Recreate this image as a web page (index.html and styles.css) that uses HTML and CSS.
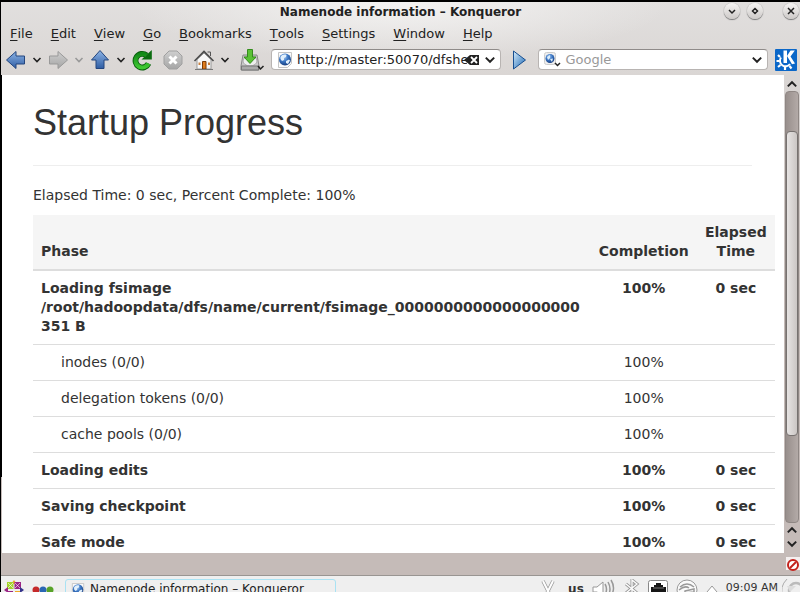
FILE: index.html
```html
<!DOCTYPE html>
<html lang="en">
<head>
<meta charset="utf-8">
<title>Namenode information – Konqueror</title>
<link rel="stylesheet" href="styles.css">
</head>
<body>
<svg class="defs" width="0" height="0" aria-hidden="true">
  <defs>
    <linearGradient id="blue" x1="0" y1="0" x2="0" y2="1"><stop offset="0" stop-color="#8db4e6"/><stop offset="1" stop-color="#2f5da3"/></linearGradient>
    <linearGradient id="grey" x1="0" y1="0" x2="0" y2="1"><stop offset="0" stop-color="#cfcfcf"/><stop offset="1" stop-color="#a5a5a5"/></linearGradient>
    <linearGradient id="green" x1="0" y1="0" x2="0" y2="1"><stop offset="0" stop-color="#128a18"/><stop offset="1" stop-color="#3fc832"/></linearGradient>
    <linearGradient id="sky" x1="0" y1="0" x2="1" y2="1"><stop offset="0" stop-color="#d5ecfb"/><stop offset="1" stop-color="#1d68b4"/></linearGradient>
    <radialGradient id="ball" cx=".4" cy=".3" r=".7"><stop offset="0" stop-color="#a9cdf3"/><stop offset=".5" stop-color="#3c77c4"/><stop offset="1" stop-color="#173f82"/></radialGradient>
    <symbol id="globe" viewBox="0 0 16 16">
      <path d="M1.500.500h13v11l-4 4h-9z" fill="#fafafa" stroke="#c4c4c4"/>
      <circle cx="8" cy="7.500" r="6" fill="url(#ball)"/>
      <path d="M3.500 5C5 2.500 8 2 9.500 3L9 5 7 6v2L5 9 3.500 7zM9 9l3-1.500 1 1-2 3.500-2-1z" fill="#e2f0fc"/>
    </symbol>
    <symbol id="chev" viewBox="0 0 10 8"><path d="M1.500 2 5 5.500 8.500 2" fill="none" stroke="currentColor" stroke-width="1.600"/></symbol>
  </defs>
</svg>
<div class="window">
  <header class="chrome">
    <div class="titlebar">
      <span class="title">Namenode information – Konqueror</span>
      <div class="winbtns">
        <button aria-label="Minimize"><svg width="16" height="16" viewBox="0 0 16 16"><path d="M5 7l3 3 3-3" /></svg></button>
        <button aria-label="Maximize"><svg width="16" height="16" viewBox="0 0 16 16"><path d="M8 5.500 10.500 8 8 10.500 5.500 8z"/></svg></button>
        <button class="close" aria-label="Close"><svg width="16" height="16" viewBox="0 0 16 16"><path d="M5 5l6 6M11 5l-6 6"/></svg></button>
      </div>
    </div>
    <nav class="menu">
      <button><u>F</u>ile</button><button><u>E</u>dit</button><button><u>V</u>iew</button><button><u>G</u>o</button><button><u>B</u>ookmarks</button><button><u>T</u>ools</button><button><u>S</u>ettings</button><button><u>W</u>indow</button><button><u>H</u>elp</button>
    </nav>
    <div class="toolbar">
      <div class="tools">
        <button aria-label="Back"><svg width="22" height="22" viewBox="0 0 22 22"><path d="M1.500 11 11 2.500V7h8.500v8H11v4.500z" fill="url(#blue)" stroke="#24467e"/></svg></button>
        <button class="drop" aria-label="Back history"><svg width="10" height="8"><use href="#chev"/></svg></button>
        <button aria-label="Forward"><svg width="22" height="22" viewBox="0 0 22 22"><path d="M20.500 11 11 2.500V7H2.500v8H11v4.500z" fill="url(#grey)" stroke="#999"/></svg></button>
        <button class="drop off" aria-label="Forward history"><svg width="10" height="8"><use href="#chev"/></svg></button>
        <button aria-label="Up"><svg width="22" height="22" viewBox="0 0 22 22"><path d="M11 1.500 19.500 11H15v8.500H7V11H2.500z" fill="url(#blue)" stroke="#24467e"/></svg></button>
        <button class="drop" aria-label="Up history"><svg width="10" height="8"><use href="#chev"/></svg></button>
        <button aria-label="Reload"><svg width="22" height="22" viewBox="0 0 22 22"><path d="M15.500 6.300A6.800 6.800 0 1 0 17.500 14.500" fill="none" stroke="#075b0b" stroke-width="5.800"/><path d="M10.500 10.500h10.300V1z" fill="#0b6c10"/><path d="M15.500 6.300A6.800 6.800 0 1 0 17.500 14.500" fill="none" stroke="url(#green)" stroke-width="4.200"/></svg></button>
        <button class="stop" aria-label="Stop"><svg width="22" height="22" viewBox="0 0 22 22"><path d="M7 2h8l5 5v8l-5 5H7l-5-5V7z" fill="url(#grey)" stroke="#a0a0a0"/><path d="M7.500 7.500l7 7M14.500 7.500l-7 7" stroke="#fff" stroke-width="3"/></svg></button>
        <button class="home" aria-label="Home"><svg width="22" height="22" viewBox="0 0 22 22"><path d="M4 10.500 11 4l7 6.500V20H4z" fill="#f8f8f8" stroke="#999"/><path d="M1.500 12 11 2.500l9.500 9.500" fill="none" stroke="#4b4b4b" stroke-width="1.600"/><path d="M14.500 3h3v4" fill="none" stroke="#555"/><path d="M9.500 12.500h3.500V20H9.500z" fill="#e07c1c" stroke="#7a3d0b"/><path d="M5.500 13.500h2v2.500h-2zM15 13.500h2v2.500h-2z" fill="#c9803f"/><path d="M2 20.500h18" stroke="#777"/></svg></button>
        <button class="drop" aria-label="Home list"><svg width="10" height="8"><use href="#chev"/></svg></button>
        <button class="save" aria-label="Downloads"><svg width="26" height="22" viewBox="0 0 26 22"><path d="M4 6h14l2 11v4H2v-4z" fill="#c9c9c9" stroke="#888"/><ellipse cx="11" cy="12" rx="7" ry="5" fill="#eee" stroke="#aaa"/><path d="M2.500 17h17v4h-17z" fill="#aaa" stroke="#777"/><path d="M8.500.500h5V8H17l-6 6.500L5 8h3.500z" fill="#5ac135" stroke="#348d1c"/><path d="M19 17l2.500 3 3-3" fill="none" stroke="#222" stroke-width="1.500"/></svg></button>
      </div>
      <div class="field address">
        <svg width="16" height="16"><use href="#globe"/></svg>
        <input type="text" aria-label="Location" value="http://master:50070/dfshealth.html">
        <button class="clear" aria-label="Clear location"><svg width="16" height="12" viewBox="0 0 16 12"><path d="M0 6 6 1h9v10H6z" fill="#222"/><path d="M7 3l6 6M13 3 7 9" stroke="#fff" stroke-width="1.800"/></svg></button>
        <button class="drop" aria-label="Location history"><svg width="12" height="10"><use href="#chev"/></svg></button>
      </div>
      <button class="go" aria-label="Go"><svg width="15" height="20" viewBox="0 0 15 20"><path d="M1.500 1 13.500 10 1.500 19z" fill="url(#sky)" stroke="#174f91"/></svg></button>
      <div class="field search">
        <svg width="18" height="16" viewBox="0 0 18 16"><rect x=".5" y=".5" width="11" height="12" rx="2" fill="#eee" stroke="#ccc"/><circle cx="6" cy="6.500" r="4.500" fill="url(#ball)"/><path d="M3 5l3-2v3L4 8zM6 7l3-.5L8 10z" fill="#dcedfb"/><path d="M11 11l2.500 2.500L16 11" fill="none" stroke="#222" stroke-width="1.500"/></svg>
        <input type="text" aria-label="Web search" placeholder="Google">
        <button class="drop" aria-label="Search history"><svg width="12" height="10"><use href="#chev"/></svg></button>
      </div>
      <svg class="kde" width="22" height="22" viewBox="0 0 22 22"><rect width="22" height="22" rx="1" fill="#0b67c8"/><path d="M6 8.500A5.500 5.500 0 1 0 15 15" fill="none" stroke="#fff" stroke-width="2"/><path d="M5 8 3 6M4.500 12H1.500M5.500 16l-2.500 2M10 18v3M14.500 17l2 2.500" stroke="#fff" stroke-width="2.200"/><path d="M8.500 1.500H12v12.500H8.500zM12 7l3.500-5.500h4.300L15.500 7.500l4.500 7-3 .8z" fill="#fff"/></svg>
    </div>
  </header>
  <div class="view">
    <main class="page">
      <h1>Startup Progress</h1>
      <p>Elapsed Time: 0 sec, Percent Complete: 100%</p>
      <table>
        <thead><tr><th>Phase</th><th>Completion</th><th>Elapsed Time</th></tr></thead>
        <tbody>
          <tr class="phase"><td>Loading fsimage /root/hadoopdata/dfs/name/current/fsimage_0000000000000000000 351 B</td><td>100%</td><td>0 sec</td></tr>
          <tr class="step"><td>inodes (0/0)</td><td>100%</td><td></td></tr>
          <tr class="step"><td>delegation tokens (0/0)</td><td>100%</td><td></td></tr>
          <tr class="step"><td>cache pools (0/0)</td><td>100%</td><td></td></tr>
          <tr class="phase"><td>Loading edits</td><td>100%</td><td>0 sec</td></tr>
          <tr class="phase"><td>Saving checkpoint</td><td>100%</td><td>0 sec</td></tr>
          <tr class="phase"><td>Safe mode</td><td>100%</td><td>0 sec</td></tr>
        </tbody>
      </table>
    </main>
    <div class="scroll">
      <button aria-label="Scroll up"><svg class="up" width="12" height="10"><use href="#chev"/></svg></button>
      <div class="track"><div class="thumb"></div></div>
      <button aria-label="Page up"><svg class="up" width="12" height="10"><use href="#chev"/></svg></button>
      <button aria-label="Scroll down"><svg width="12" height="10"><use href="#chev"/></svg></button>
    </div>
  </div>
  <div class="status">
    <svg width="14" height="16" viewBox="0 0 14 16"><path d="M0 1h14v13H0z" fill="#f5f0f0"/><circle cx="7" cy="9" r="5" fill="#fff" stroke="#c3221c" stroke-width="2"/><path d="M4 12l6-6" stroke="#c3221c" stroke-width="2"/></svg>
  </div>
  <footer class="taskbar">
    <button class="start" aria-label="Applications"><svg width="20" height="20" viewBox="0 0 20 20"><path d="M10 0l3 4H7z" fill="#efa724"/><path d="M3 2h6.500v7H3z" fill="#a4d32c"/><path d="M10.500 2H17v7h-6.500z" fill="#9b2586"/><path d="M3 11h6v6H3z" fill="#9b2586"/><path d="M11 11h6v6h-6z" fill="#efa724"/><path d="M0 10l4-3v6z" fill="#9b2586"/><path d="M20 10l-4-3v6z" fill="#35348b"/><path d="M4 3l5 5M16 3l-5 5M9 3 4 8M11 3l5 5" stroke="#fff" stroke-width=".6"/></svg></button>
    <button class="dots" aria-label="Activities"><svg width="22" height="14" viewBox="0 0 22 14"><circle cx="4" cy="4" r="3.500" fill="#c52a2a"/><circle cx="11" cy="4" r="3.500" fill="#2b67b4"/><circle cx="18" cy="4" r="3.500" fill="#58a329"/></svg></button>
    <button class="task"><svg width="14" height="16" viewBox="0 0 16 16"><use href="#globe"/></svg><span>Namenode information – Konqueror</span></button>
    <div class="tray">
      <svg width="16" height="18" viewBox="0 0 16 18"><path d="M3 2l6 12M13 2 7 14" stroke="#999" stroke-width="3.500"/><path d="M3 2l6 12M13 2 7 14" stroke="#fff" stroke-width="2"/></svg>
      <span class="layout">us</span>
      <svg width="24" height="18" viewBox="0 0 24 18" fill="none" stroke="#999"><path d="M1 8h4l6-5v14l-6-4H1z" fill="#fff"/><path d="M13 5q3 5 0 11M16 3q4 7 0 14M19 1q5 8 0 16" stroke-width="1.500"/></svg>
      <svg width="16" height="18" viewBox="0 0 16 18" fill="none"><path d="M2 5l11 9-5 4V1l5 4-11 9" stroke="#999" stroke-width="3"/><path d="M2 5l11 9-5 4V1l5 4-11 9" stroke="#fff" stroke-width="1.300"/></svg>
      <svg width="20" height="18" viewBox="0 0 20 18"><rect x=".5" y="1.500" width="19" height="18" rx="2" fill="#fff" stroke="#888"/><path d="M3 17V8h3V6h2V4h5v2h2v2h3v9z" fill="#161616"/><path d="M5 9h11" stroke="#777"/></svg>
      <svg width="22" height="18" viewBox="0 0 22 18" fill="none" stroke="#999"><circle cx="11" cy="11" r="10" fill="#fafafa"/><path d="M4 8q7-6 14 0M3 11q6-5 10-2M9 12l9-2v3l-9 1z" stroke-width="1.500"/></svg>
      <svg width="12" height="18" viewBox="0 0 12 18"><path d="M1 13l5-6 5 6-2 2H3z" fill="#fff" stroke="#999"/></svg>
      <time>09:09 AM</time>
      <svg class="cashew" width="18" height="18" viewBox="0 0 18 18" fill="none"><path d="M5 0Q-3 8 1 18" stroke="#aaa"/><circle cx="14" cy="11" r="7" stroke="#bbb" stroke-width="2.500"/><path d="M5 7h9l-6 6z" fill="#ddd"/></svg>
    </div>
  </footer>
</div>
</body>
</html>
```
FILE: styles.css
```css
* { box-sizing: border-box; }

body {
  margin: 0;
  overflow: hidden;
  background: #000;
  color: #333;
  font: 14px/19px "DejaVu Sans", sans-serif;
}

button {
  display: flex;
  align-items: center;
  justify-content: center;
  padding: 0;
  border: 0;
  background: none;
  color: #222;
  font: inherit;
}

svg { display: block; flex: none; }
.defs { position: absolute; }

.window {
  display: flex;
  flex-direction: column;
  height: 100vh;
  padding: 2px 0 0 1px;
}

.chrome {
  flex: none;
  background: radial-gradient(ellipse 270px 60px at 50% 0, #f4f3f2, transparent), linear-gradient(#e1dfde, #dad6d4);
  font-size: 13px;
}

.titlebar { display: flex; position: relative; height: 21px; }
.title { flex: 1; text-align: center; font-weight: bold; font-size: 12px; line-height: 21px; color: #222; }
.winbtns { position: absolute; right: 1px; top: 1px; display: flex; gap: 7px; }
.winbtns button {
  width: 16px;
  height: 16px;
  border-radius: 50%;
  background: linear-gradient(#f5f4f3, #cdcac8);
  box-shadow: 0 1px 1px #777, 0 0 1px #888;
}
.winbtns .close { margin-left: 13px; }
.winbtns path { fill: none; stroke: #222; stroke-width: 1.5; }

.menu { display: flex; gap: 18px; height: 21px; padding-left: 9px; }
.menu u { text-underline-offset: 2px; }

.toolbar { display: flex; align-items: center; height: 31px; padding: 0 3px 0 4px; }
.tools { display: flex; align-items: center; width: 266px; }
.drop { width: 20px; }
.off { color: #999; }
.stop { margin-left: 9px; }
.home { margin-left: 9px; }
.save { margin-left: 4px; }

.field {
  display: flex;
  align-items: center;
  min-width: 0;
  height: 21px;
  padding: 0 0 0 5px;
  border: 1px solid #b8b4b2;
  border-top-color: #8f8b89;
  border-radius: 4px;
  background: #fff;
}
.field input {
  flex: 1;
  min-width: 0;
  width: 0;
  padding: 0;
  border: 0;
  outline: 0;
  background: none;
  color: #222;
  font: inherit;
}
.field input::placeholder { color: #999; opacity: 1; }
.address { flex: 231; gap: 4px; }
.address .clear { margin-left: -7px; }
.address .drop { margin-left: -4px; }
.search { flex: 230; gap: 3px; }
.go { margin: 0 11px; }
.kde { margin-left: 7px; }

.view {
  display: flex;
  flex: 1;
  min-height: 0;
  padding-left: 1px;
  background: linear-gradient(#000 84%, #c5bbb8 84%);
}
.page { flex: 1; min-width: 0; overflow: hidden; padding: 28px 32px 0 31px; background: #fff; }

h1 {
  margin: 0 0 20px;
  padding-bottom: 22px;
  border-bottom: 1px solid #eee;
  font: 36px/40px "Liberation Sans", sans-serif;
}
p { margin: 0 0 10px; }

table { width: calc(100% + 23px); border-collapse: collapse; }
th, td { padding: 8px; text-align: center; vertical-align: top; }
th { vertical-align: bottom; background: #f5f5f5; border-bottom: 2px solid #ddd; }
td { border-top: 1px solid #ddd; }
th:first-child, td:first-child { text-align: left; }
.phase td { font-weight: bold; }
.step td:first-child { padding-left: 28px; }

.scroll {
  display: flex;
  flex-direction: column;
  width: 16px;
  padding: 2px 1px;
  background: linear-gradient(#dad6d4, #c5bbb8 50%);
}
.scroll button { height: 14px; }
.up { transform: rotate(180deg); }
.track {
  flex: 1;
  padding-top: 39px;
  border: 1px solid #8f8784;
  border-radius: 4px;
  background: linear-gradient(90deg, #988f8c, #b3aaa7);
}
.thumb {
  height: 78%;
  border: 1px solid #777270;
  border-radius: 4px;
  background: linear-gradient(90deg, #e7e4e3, #cbc6c4);
}

.status {
  display: flex;
  flex: none;
  justify-content: flex-end;
  align-items: center;
  height: 23px;
  border-bottom: 1px solid #999592;
  background: #c5bbb8;
}

.taskbar {
  display: flex;
  flex: none;
  height: 16px;
  overflow: hidden;
  background: #efefef;
  font-size: 12px;
  line-height: 17px;
}
.taskbar button { align-self: flex-start; }
.start { margin: 4px 0 0 3px; }
.dots { margin: 10px 0 0 8px; }
.task {
  align-items: flex-start;
  justify-content: flex-start;
  gap: 5px;
  width: 271px;
  height: 24px;
  margin: 3px 0 0 11px;
  padding: 2px 0 0 5px;
  border: 1px solid #a9e2f3;
  border-radius: 3px;
}
.task span { line-height: 15px; }
.tray { display: flex; gap: 8px; margin: 3px 0 0 auto; }
.layout { margin: 2px 0 0 4px; font-weight: bold; }
.tray time { color: #333; font-size: 11px; }
.cashew { margin-left: -4px; }
```
